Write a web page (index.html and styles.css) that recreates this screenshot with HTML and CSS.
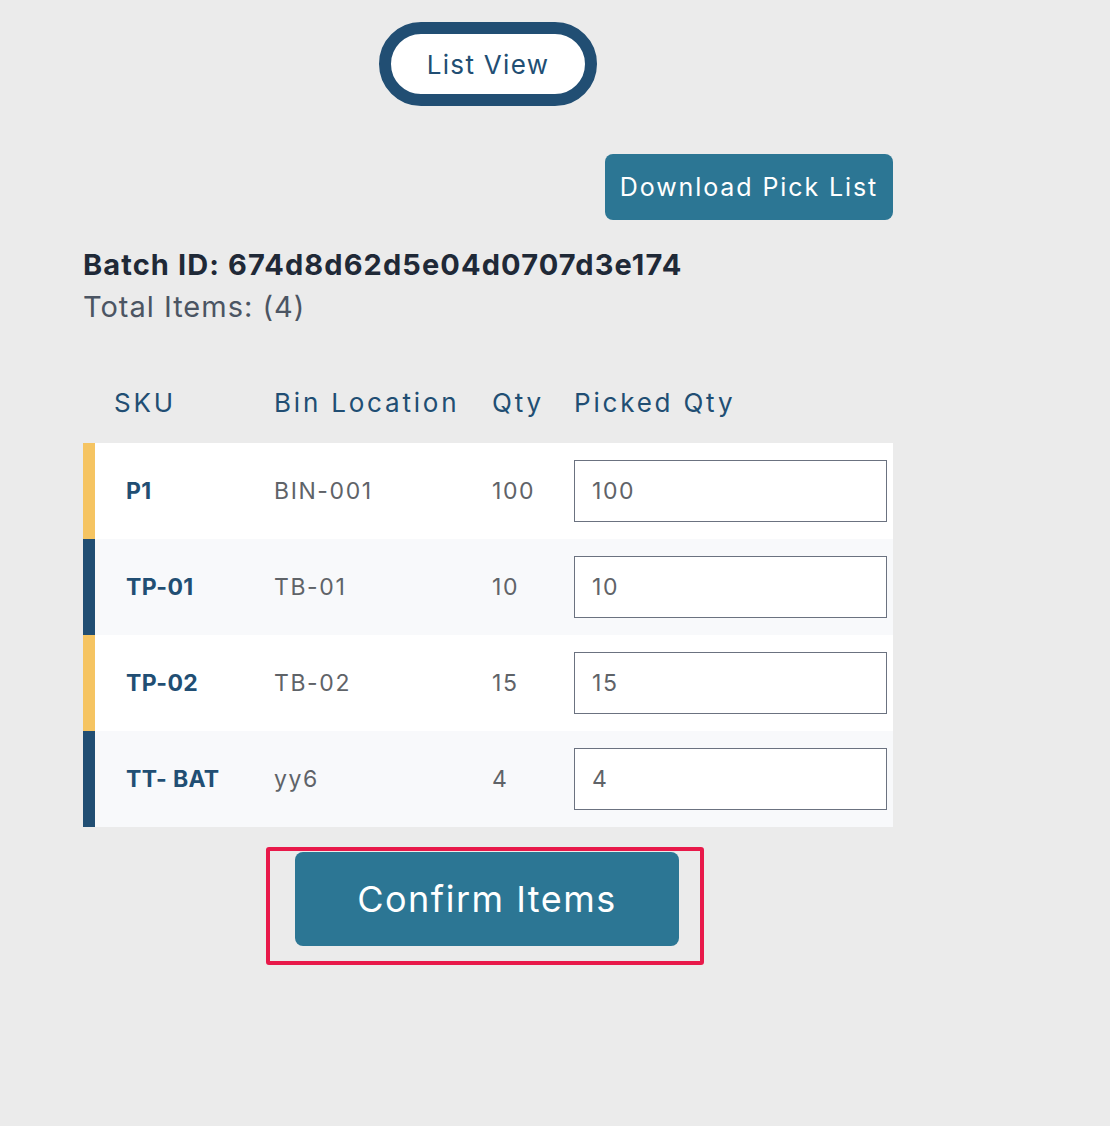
FILE: index.html
```html
<!DOCTYPE html>
<html lang="en">
<head>
    <meta charset="UTF-8">
    <meta name="viewport" content="width=device-width, initial-scale=1.0">
    <title>Pick List</title>
    <link rel="stylesheet" href="styles.css">
</head>
<body>
    <div class="page">
        <div class="view-toggle">
            <button class="pill">List View</button>
        </div>

        <div class="actions">
            <button class="btn-download">Download Pick List</button>
        </div>

        <div class="batch-info">
            <h2>Batch ID: 674d8d62d5e04d0707d3e174</h2>
            <p>Total Items: (4)</p>
        </div>

        <table class="pick-table">
            <thead>
                <tr>
                    <th class="col-sku">SKU</th>
                    <th class="col-bin">Bin Location</th>
                    <th class="col-qty">Qty</th>
                    <th class="col-picked">Picked Qty</th>
                </tr>
            </thead>
            <tbody>
                <tr class="row-odd">
                    <td class="sku">P1</td>
                    <td>BIN-001</td>
                    <td>100</td>
                    <td class="picked"><input type="text" value="100"></td>
                </tr>
                <tr class="row-even">
                    <td class="sku">TP-01</td>
                    <td>TB-01</td>
                    <td>10</td>
                    <td class="picked"><input type="text" value="10"></td>
                </tr>
                <tr class="row-odd">
                    <td class="sku">TP-02</td>
                    <td>TB-02</td>
                    <td>15</td>
                    <td class="picked"><input type="text" value="15"></td>
                </tr>
                <tr class="row-even">
                    <td class="sku">TT- BAT</td>
                    <td>yy6</td>
                    <td>4</td>
                    <td class="picked"><input type="text" value="4"></td>
                </tr>
            </tbody>
        </table>

        <div class="confirm-wrap">
            <div class="confirm-box">
                <button class="btn-confirm">Confirm Items</button>
            </div>
        </div>
    </div>
</body>
</html>
```

FILE: styles.css
```css
html, body {
    margin: 0;
    padding: 0;
    background-color: #ebebeb;
    font-family: Inter, "Open Sans", sans-serif;
}
.page {
    width: 810px;
    margin-left: 83px;
    padding-top: 22px;
}
button {
    font-family: inherit;
    cursor: pointer;
}
.view-toggle {
    display: flex;
    justify-content: center;
}
.pill {
    width: 218px;
    height: 84px;
    border: 12px solid #214e73;
    border-radius: 42px;
    background: #fff;
    color: #214e73;
    font-size: 26px;
    letter-spacing: 1.3px;
}
.actions {
    display: flex;
    justify-content: flex-end;
    margin-top: 48px;
}
.btn-download {
    width: 288px;
    height: 66px;
    border: none;
    border-radius: 8px;
    background-color: #2c7694;
    color: #fff;
    font-size: 25px;
    letter-spacing: 1.9px;
}
.batch-info {
    margin-top: 24px;
}
.batch-info h2 {
    margin: 0;
    font-size: 29px;
    font-weight: 700;
    color: #1f2937;
    line-height: 42px;
    letter-spacing: 1.1px;
}
.batch-info p {
    margin: 0;
    font-size: 29px;
    color: #4b5563;
    line-height: 42px;
    letter-spacing: 1px;
}
.pick-table {
    width: 810px;
    margin-top: 33px;
    border-collapse: separate;
    border-spacing: 0;
    table-layout: fixed;
}
.pick-table th,
.pick-table td {
    box-sizing: border-box;
}
.pick-table th {
    text-align: left;
    font-weight: 400;
    font-size: 26px;
    letter-spacing: 2.8px;
    color: #214e73;
    height: 82px;
    vertical-align: middle;
    padding: 0 0 0 16px;
}
.pick-table th.col-sku {
    padding-left: 31px;
}
.col-sku { width: 175px; }
.col-bin { width: 218px; }
.col-qty { width: 82px; }
.pick-table td {
    height: 96px;
    padding: 0 0 0 16px;
    font-size: 23px;
    letter-spacing: 1.6px;
    color: #5f6368;
    vertical-align: middle;
}
.pick-table td.sku {
    padding-left: 31px;
    font-weight: 700;
    color: #214e73;
    letter-spacing: 0.3px;
}
.row-odd td { background: #fff; }
.row-even td { background: #f8f9fb; }
.row-odd td.sku { border-left: 12px solid #f5c462; }
.row-even td.sku { border-left: 12px solid #214e73; }
.pick-table td.picked {
    padding-right: 6px;
}
.picked input {
    box-sizing: border-box;
    width: 100%;
    height: 62px;
    border: 1px solid #6b7280;
    border-radius: 0;
    padding: 0 17px;
    font-family: inherit;
    font-size: 23px;
    letter-spacing: 1.6px;
    color: #5f6368;
    background: #fff;
    outline: none;
}
.confirm-wrap {
    display: flex;
    justify-content: center;
    margin-top: 20px;
}
.confirm-box {
    border: 4px solid #e8194a;
    border-radius: 3px;
    padding: 1px 21px 15px 25px;
    margin-left: -6px;
}
.btn-confirm {
    display: block;
    width: 384px;
    height: 94px;
    border: none;
    border-radius: 8px;
    background-color: #2c7694;
    color: #fff;
    font-size: 36px;
    letter-spacing: 1.5px;
}
```
